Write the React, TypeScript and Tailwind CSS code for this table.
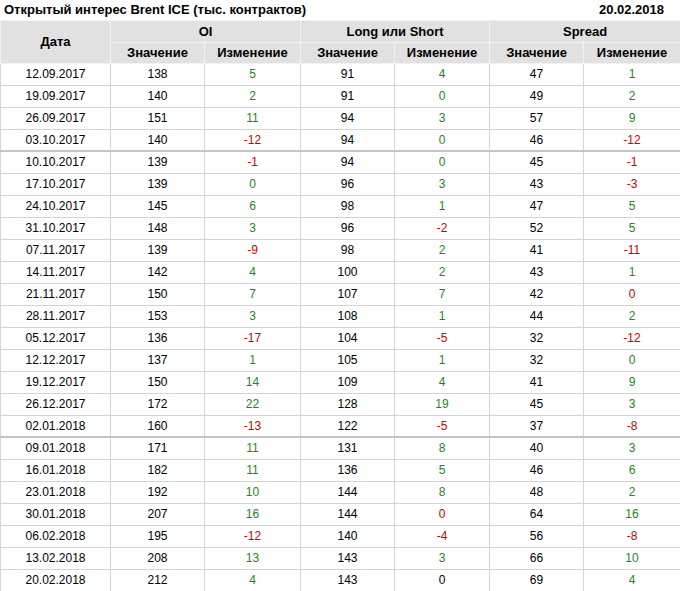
type Cell = number | string;

const ROWS: Cell[][] = [
  ["12.09.2017", 138, 5, 91, 4, 47, 1],
  ["19.09.2017", 140, 2, 91, "+0", 49, 2],
  ["26.09.2017", 151, 11, 94, 3, 57, 9],
  ["03.10.2017", 140, -12, 94, "+0", 46, -12],
  ["10.10.2017", 139, -1, 94, "+0", 45, -1],
  ["17.10.2017", 139, "+0", 96, 3, 43, -3],
  ["24.10.2017", 145, 6, 98, 1, 47, 5],
  ["31.10.2017", 148, 3, 96, -2, 52, 5],
  ["07.11.2017", 139, -9, 98, 2, 41, -11],
  ["14.11.2017", 142, 4, 100, 2, 43, 1],
  ["21.11.2017", 150, 7, 107, 7, 42, "-0"],
  ["28.11.2017", 153, 3, 108, 1, 44, 2],
  ["05.12.2017", 136, -17, 104, -5, 32, -12],
  ["12.12.2017", 137, 1, 105, 1, 32, "+0"],
  ["19.12.2017", 150, 14, 109, 4, 41, 9],
  ["26.12.2017", 172, 22, 128, 19, 45, 3],
  ["02.01.2018", 160, -13, 122, -5, 37, -8],
  ["09.01.2018", 171, 11, 131, 8, 40, 3],
  ["16.01.2018", 182, 11, 136, 5, 46, 6],
  ["23.01.2018", 192, 10, 144, 8, 48, 2],
  ["30.01.2018", 207, 16, 144, "-0", 64, 16],
  ["06.02.2018", 195, -12, 140, -4, 56, -8],
  ["13.02.2018", 208, 13, 143, 3, 66, 10],
  ["20.02.2018", 212, 4, 143, 0, 69, 4],
];

// rows that start a new block get a heavier top rule
const BREAKS = new Set([4, 17]);

const HEAD = "border border-[#f2f2f2] bg-[#e1e1e1] text-[13px] font-bold text-black";

function changeCell(v: Cell) {
  let color = "text-black";
  let text = String(v);
  if (typeof v === "string") {
    color = v.startsWith("-") ? "text-[#d00000]" : "text-[#1d871d]";
    text = "0";
  } else if (v > 0) color = "text-[#1d871d]";
  else if (v < 0) color = "text-[#d00000]";
  return { color, text };
}

export default function App() {
  return (
    <div className="w-[680px] bg-white font-['Liberation_Sans',Arial,sans-serif] text-[12px] text-black">
      <div className="flex h-[20px] items-center justify-between pl-[4px] pr-[16px] text-[13px] font-bold">
        <span>Открытый интерес Brent ICE (тыс. контрактов)</span>
        <span>20.02.2018</span>
      </div>
      <table className="w-[680px] table-fixed border-collapse text-center">
        <colgroup>
          <col className="w-[110px]" />
          <col className="w-[94px]" />
          <col className="w-[96px]" />
          <col className="w-[94px]" />
          <col className="w-[95px]" />
          <col className="w-[94px]" />
          <col className="w-[97px]" />
        </colgroup>
        <thead>
          <tr className="h-[22px]">
            <th rowSpan={2} className={HEAD}>Дата</th>
            <th colSpan={2} className={HEAD}>OI</th>
            <th colSpan={2} className={HEAD}>Long или Short</th>
            <th colSpan={2} className={HEAD}>Spread</th>
          </tr>
          <tr className="h-[20px]">
            <th className={HEAD}>Значение</th>
            <th className={HEAD}>Изменение</th>
            <th className={HEAD}>Значение</th>
            <th className={HEAD}>Изменение</th>
            <th className={HEAD}>Значение</th>
            <th className={HEAD}>Изменение</th>
          </tr>
        </thead>
        <tbody>
          {ROWS.map((row, i) => {
            const edge = BREAKS.has(i) ? "border-t-2 border-t-[#c4c4c4]" : "";
            return (
              <tr key={i} className="h-[22px]">
                {row.map((v, j) => {
                  const isChange = j > 0 && j % 2 === 0;
                  const { color, text } = isChange ? changeCell(v) : { color: "text-black", text: String(v) };
                  return (
                    <td key={j} className={`border border-[#d4d4d4] p-0 ${edge} ${color}`}>
                      {text}
                    </td>
                  );
                })}
              </tr>
            );
          })}
        </tbody>
      </table>
    </div>
  );
}
